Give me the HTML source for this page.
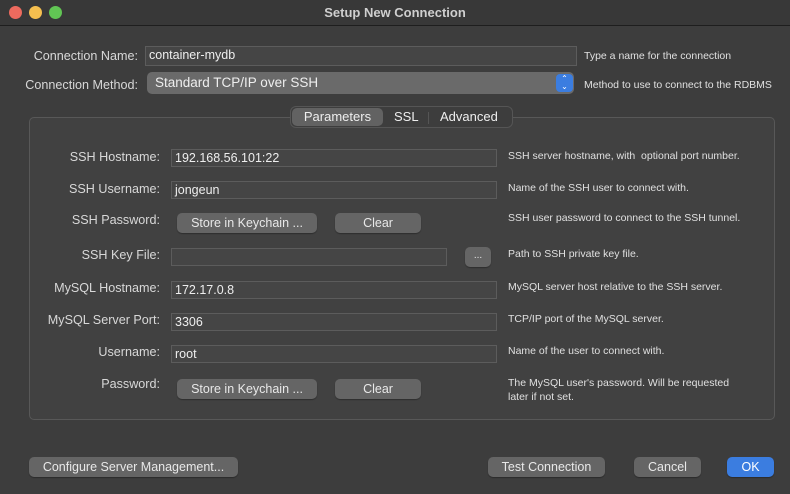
<!DOCTYPE html>
<html><head><meta charset="utf-8"><style>
*{box-sizing:border-box;margin:0;padding:0}
body{width:790px;height:494px;background:#3d3d3d;font-family:"Liberation Sans",sans-serif;color:#dcdcdc;position:relative;overflow:hidden}
.a{position:absolute}
.tb{left:0;top:0;width:790px;height:26px;background:#383838;border-bottom:1px solid #1e1e1e}
.dot{top:6px;width:13px;height:13px;border-radius:50%}
.title{left:0;width:790px;top:5px;text-align:center;font-weight:bold;font-size:13px;color:#cfcfcf}
.lbl{font-size:12.6px;text-align:right;color:#d8d8d8}
.help{font-size:10.5px;color:#e0e0e0;line-height:14px}
.fld{background:#454545;border:1px solid #5c5c5c;font-size:12.5px;color:#eee;padding-left:3px;line-height:16px}
.btn{background:#656565;border-radius:5px;font-size:12.5px;color:#e8e8e8;text-align:center;box-shadow:0 1px 1px rgba(0,0,0,.3)}
</style></head><body>
<div class="a tb"></div>
<div class="a dot" style="left:9px;background:#ed6a5e"></div>
<div class="a dot" style="left:29px;background:#f5bf4f"></div>
<div class="a dot" style="left:49px;background:#61c554"></div>
<div class="a title">Setup New Connection</div>

<div class="a lbl" style="left:0;width:138px;top:49px">Connection Name:</div>
<div class="a fld" style="left:145px;top:46px;width:432px;height:20px">container-mydb</div>
<div class="a help" style="left:584px;top:49px">Type a name for the connection</div>

<div class="a lbl" style="left:0;width:138px;top:78px">Connection Method:</div>
<div class="a" style="left:147px;top:72px;width:427px;height:22px;background:#6a6a6a;border-radius:5px;font-size:13.5px;color:#eee;padding:3px 0 0 8px">Standard TCP/IP over SSH</div>
<div class="a" style="left:556px;top:74px;width:17px;height:18px;background:#3b7de0;border-radius:4px;color:#fff;font-size:8px;text-align:center;line-height:8px;padding-top:1px">&#8963;<br>&#8964;</div>
<div class="a help" style="left:584px;top:78px">Method to use to connect to the RDBMS</div>

<div class="a" style="left:29px;top:117px;width:746px;height:303px;background:#414141;border:1px solid #585858;border-radius:5px"></div>
<div class="a" style="left:290px;top:106px;width:223px;height:22px;background:#3d3d3d;border:1px solid #555;border-radius:6px"></div>
<div class="a" style="left:292px;top:108px;width:91px;height:18px;background:#626262;border-radius:5px"></div>
<div class="a" style="left:292px;top:109px;width:91px;font-size:13px;text-align:center;color:#eee">Parameters</div>
<div class="a" style="left:394px;top:109px;font-size:13px;color:#eee">SSL</div>
<div class="a" style="left:428px;top:112px;width:1px;height:12px;background:#555"></div>
<div class="a" style="left:440px;top:109px;font-size:13px;color:#eee">Advanced</div>

<div class="a lbl" style="left:0;width:160px;top:150px">SSH Hostname:</div>
<div class="a fld" style="left:171px;top:149px;width:326px;height:18px">192.168.56.101:22</div>
<div class="a help" style="left:508px;top:149px">SSH server hostname, with &nbsp;optional port number.</div>

<div class="a lbl" style="left:0;width:160px;top:182px">SSH Username:</div>
<div class="a fld" style="left:171px;top:181px;width:326px;height:18px">jongeun</div>
<div class="a help" style="left:508px;top:181px">Name of the SSH user to connect with.</div>

<div class="a lbl" style="left:0;width:160px;top:213px">SSH Password:</div>
<div class="a btn" style="left:177px;top:213px;width:140px;height:20px;line-height:20px">Store in Keychain ...</div>
<div class="a btn" style="left:335px;top:213px;width:86px;height:20px;line-height:20px">Clear</div>
<div class="a help" style="left:508px;top:211px">SSH user password to connect to the SSH tunnel.</div>

<div class="a lbl" style="left:0;width:160px;top:248px">SSH Key File:</div>
<div class="a fld" style="left:171px;top:248px;width:276px;height:18px"></div>
<div class="a btn" style="left:465px;top:247px;width:26px;height:20px;line-height:18px;font-size:10px">...</div>
<div class="a help" style="left:508px;top:247px">Path to SSH private key file.</div>

<div class="a lbl" style="left:0;width:160px;top:281px">MySQL Hostname:</div>
<div class="a fld" style="left:171px;top:281px;width:326px;height:18px">172.17.0.8</div>
<div class="a help" style="left:508px;top:280px">MySQL server host relative to the SSH server.</div>

<div class="a lbl" style="left:0;width:160px;top:313px">MySQL Server Port:</div>
<div class="a fld" style="left:171px;top:313px;width:326px;height:18px">3306</div>
<div class="a help" style="left:508px;top:312px">TCP/IP port of the MySQL server.</div>

<div class="a lbl" style="left:0;width:160px;top:345px">Username:</div>
<div class="a fld" style="left:171px;top:345px;width:326px;height:18px">root</div>
<div class="a help" style="left:508px;top:344px">Name of the user to connect with.</div>

<div class="a lbl" style="left:0;width:160px;top:377px">Password:</div>
<div class="a btn" style="left:177px;top:379px;width:140px;height:20px;line-height:20px">Store in Keychain ...</div>
<div class="a btn" style="left:335px;top:379px;width:86px;height:20px;line-height:20px">Clear</div>
<div class="a help" style="left:508px;top:376px">The MySQL user's password. Will be requested<br>later if not set.</div>

<div class="a btn" style="left:29px;top:457px;width:209px;height:20px;line-height:20px">Configure Server Management...</div>
<div class="a btn" style="left:488px;top:457px;width:117px;height:20px;line-height:20px">Test Connection</div>
<div class="a btn" style="left:634px;top:457px;width:67px;height:20px;line-height:20px">Cancel</div>
<div class="a btn" style="left:727px;top:457px;width:47px;height:20px;line-height:20px;background:#3b7de0;color:#fff">OK</div>
</body></html>
